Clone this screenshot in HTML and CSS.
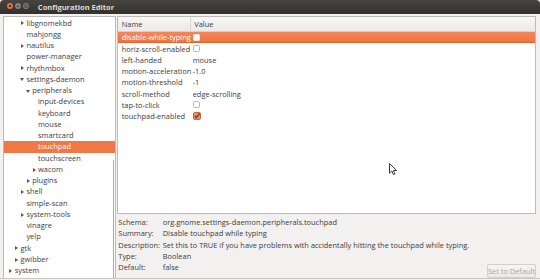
FILE: index.html
```html
<!DOCTYPE html>
<html>
<head>
<meta charset="utf-8">
<link rel="stylesheet" href="styles.css">
</head>
<body>
<div class="window">
  <div class="titlebar">
    <div class="wbtns">
      <svg class="wbtn" width="6" height="6" viewBox="0 0 6 6"><circle cx="3" cy="3" r="2.9" fill="#ef7445"/><path d="M1.9 1.9L4.1 4.1M4.1 1.9L1.9 4.1" stroke="#3a1e10" stroke-width="0.9"/></svg>
      <svg class="wbtn" width="6" height="6" viewBox="0 0 6 6"><circle cx="3" cy="3" r="2.9" fill="#85847f"/><path d="M1.7 3.4H4.3" stroke="#3b3a36" stroke-width="0.9"/></svg>
      <svg class="wbtn" width="6" height="6" viewBox="0 0 6 6"><circle cx="3" cy="3" r="2.9" fill="#85847f"/><rect x="1.8" y="1.8" width="2.4" height="2.4" fill="none" stroke="#3b3a36" stroke-width="0.8"/></svg>
    </div>
    <div class="wtitle">Configuration Editor</div>
  </div>
  <div class="content">
    <div class="tree">
      <div class="trow l2"><span class="exp rt"></span>libgnomekbd</div>
      <div class="trow l2"><span class="exp"></span>mahjongg</div>
      <div class="trow l2"><span class="exp rt"></span>nautilus</div>
      <div class="trow l2"><span class="exp"></span>power-manager</div>
      <div class="trow l2"><span class="exp rt"></span>rhythmbox</div>
      <div class="trow l2"><span class="exp dn"></span>settings-daemon</div>
      <div class="trow l3"><span class="exp dn"></span>peripherals</div>
      <div class="trow l4"><span class="exp"></span>input-devices</div>
      <div class="trow l4"><span class="exp"></span>keyboard</div>
      <div class="trow l4"><span class="exp"></span>mouse</div>
      <div class="trow l4"><span class="exp"></span>smartcard</div>
      <div class="trow l4 sel"><span class="exp"></span>touchpad</div>
      <div class="trow l4"><span class="exp"></span>touchscreen</div>
      <div class="trow l4"><span class="exp rt"></span>wacom</div>
      <div class="trow l3"><span class="exp rt"></span>plugins</div>
      <div class="trow l2"><span class="exp rt"></span>shell</div>
      <div class="trow l2"><span class="exp"></span>simple-scan</div>
      <div class="trow l2"><span class="exp rt"></span>system-tools</div>
      <div class="trow l2"><span class="exp"></span>vinagre</div>
      <div class="trow l2"><span class="exp"></span>yelp</div>
      <div class="trow l1"><span class="exp rt"></span>gtk</div>
      <div class="trow l1"><span class="exp rt"></span>gwibber</div>
      <div class="trow l0"><span class="exp rt"></span>system</div>
      <div class="thumb"></div>
    </div>
    <div class="right">
      <div class="list">
        <div class="lhead">
          <div class="cname">Name</div>
          <div class="cval hsep">Value</div>
        </div>
        <div class="lrow sel"><div class="cname">disable-while-typing</div><div class="cval"><svg width="7" height="7" viewBox="0 0 7 7"><rect x="0.5" y="0.5" width="6" height="6" rx="1" fill="#fff" stroke="#fbe4da"/></svg></div></div>
        <div class="lrow"><div class="cname">horiz-scroll-enabled</div><div class="cval"><svg width="7" height="7" viewBox="0 0 7 7"><rect x="0.5" y="0.5" width="6" height="6" rx="1" fill="#fff" stroke="#b9b7b3"/></svg></div></div>
        <div class="lrow"><div class="cname">left-handed</div><div class="cval">mouse</div></div>
        <div class="lrow"><div class="cname">motion-acceleration</div><div class="cval">-1.0</div></div>
        <div class="lrow"><div class="cname">motion-threshold</div><div class="cval">-1</div></div>
        <div class="lrow"><div class="cname">scroll-method</div><div class="cval">edge-scrolling</div></div>
        <div class="lrow"><div class="cname">tap-to-click</div><div class="cval"><svg width="7" height="7" viewBox="0 0 7 7"><rect x="0.5" y="0.5" width="6" height="6" rx="1" fill="#fff" stroke="#b9b7b3"/></svg></div></div>
        <div class="lrow"><div class="cname">touchpad-enabled</div><div class="cval"><svg width="8" height="8" viewBox="0 0 8 8"><rect x="0.5" y="0.5" width="7" height="7" rx="1.2" fill="#e9906a" stroke="#c2683f"/><path d="M1.8 3.8L3.4 5.6L6.6 1.4" fill="none" stroke="#7a2e12" stroke-width="1.2"/></svg></div></div>
      </div>
      <div class="bottom">
        <div class="info">
          <div class="ilabel">Schema:</div><div class="ival">org.gnome.settings-daemon.peripherals.touchpad</div>
          <div class="ilabel">Summary:</div><div class="ival">Disable touchpad while typing</div>
          <div class="ilabel">Description:</div><div class="ival">Set this to TRUE if you have problems with accidentally hitting the touchpad while typing.</div>
          <div class="ilabel">Type:</div><div class="ival">Boolean</div>
          <div class="ilabel">Default:</div><div class="ival">false</div>
        </div>
        <div class="btn">Set to Default</div>
      </div>
    </div>
  </div>
  <svg class="cursor" width="9" height="13" viewBox="0 0 9 13"><path d="M0.5 0.5L0.5 10.2L2.8 8L4.4 11.6L5.9 10.9L4.4 7.5L7.6 7.5Z" fill="#fff" stroke="#222" stroke-width="0.9" stroke-linejoin="round"/></svg>
</div>
</body>
</html>
```
FILE: styles.css
```css
html, body {
  margin: 0;
  padding: 0;
  background: #f2f1f0;
}
body {
  font-family: "Open Sans", "Liberation Sans", sans-serif;
  font-size: 7.45px;
  color: #3c3c3c;
}
.window {
  position: relative;
  width: 540px;
  height: 280px;
  display: flex;
  flex-direction: column;
  overflow: hidden;
  background: #f2f1f0;
}
.titlebar {
  height: 14px;
  flex: none;
  display: flex;
  align-items: center;
  background: linear-gradient(#45443f, #393834 60%, #32312d);
  border-top-right-radius: 4px;
  border-top-left-radius: 4px;
}
.wbtns {
  display: flex;
  gap: 2.4px;
  padding-left: 6.7px;
  margin-top: -2px;
}
.wbtn { display: block; }
.wtitle {
  margin-left: 8.4px;
  margin-top: -1px;
  font-weight: bold;
  font-size: 7.6px;
  color: #dfdbd2;
  letter-spacing: -0.05px;
}
.content {
  flex: 1;
  display: flex;
  gap: 1px;
  padding: 2px 4px 0 3px;
  border-bottom: 1px solid #c9c7c3;
  margin-bottom: 1px;
  min-height: 0;
}
.tree {
  position: relative;
  width: 111px;
  flex: none;
  background: #fff;
  border: 1px solid #bdbbb7;
  border-bottom: none;
  padding-top: 0.7px;
  overflow: hidden;
}
.trow {
  height: 11.25px;
  line-height: 11.25px;
  display: flex;
  align-items: center;
  white-space: nowrap;
}
.trow.sel {
  background: #f07746;
  color: #fff;
}
.l0 { padding-left: 4.3px; }
.l1 { padding-left: 10.1px; }
.l2 { padding-left: 16px; }
.l3 { padding-left: 21.8px; }
.l4 { padding-left: 27.6px; }
.exp {
  width: 6.4px;
  height: 11.25px;
  flex: none;
  position: relative;
}
.exp.rt::before {
  content: "";
  position: absolute;
  left: 1px;
  top: 3.6px;
  width: 0;
  height: 0;
  border-style: solid;
  border-width: 2.5px 0 2.5px 3px;
  border-color: transparent transparent transparent #555;
}
.exp.dn::before {
  content: "";
  position: absolute;
  left: 0.4px;
  top: 4.4px;
  width: 0;
  height: 0;
  border-style: solid;
  border-width: 3px 2.5px 0 2.5px;
  border-color: #555 transparent transparent transparent;
}
.thumb {
  position: absolute;
  right: 1px;
  top: 143px;
  bottom: 0;
  width: 1.4px;
  background: #e8966c;
}
.right {
  flex: 1;
  display: flex;
  flex-direction: column;
  min-width: 0;
}
.list {
  height: 196px;
  flex: none;
  background: #fff;
  border: 1px solid #bdbbb7;
  overflow: hidden;
}
.lhead {
  height: 13.7px;
  display: flex;
  align-items: center;
  background: linear-gradient(#f8f7f6, #ebeae8);
  border-bottom: 1px solid #d3d1cd;
}
.lrow {
  height: 11.25px;
  display: flex;
  align-items: center;
  white-space: nowrap;
}
.lrow.sel {
  background: linear-gradient(#f4875a, #ee733f);
  color: #fff;
  box-shadow: inset 0 -1px 0 #d9652f;
}
.cname {
  width: 72px;
  flex: none;
  padding-left: 3.7px;
  box-sizing: border-box;
}
.cval {
  padding-left: 2.7px;
  display: flex;
  align-items: center;
  height: 100%;
}
.lhead .cval { padding-left: 3.3px; }
.hsep {
  border-left: 1px solid #d9d7d3;
  height: 100%;
  box-sizing: border-box;
}
.lrow .cval svg { display: block; margin-left: 0.3px; }
.bottom {
  flex: 1;
  display: flex;
  justify-content: space-between;
  padding-top: 2.6px;
}
.info {
  display: grid;
  grid-template-columns: 44.4px auto;
  grid-auto-rows: 11.2px;
  align-items: center;
  padding-left: 1.3px;
  align-self: flex-start;
  white-space: nowrap;
}
.btn {
  align-self: flex-end;
  margin-bottom: 0.5px;
  width: 49px;
  height: 13.4px;
  box-sizing: border-box;
  border: 1px solid #d2d0cc;
  border-radius: 2px;
  background: linear-gradient(#f6f5f4, #ebeae8);
  color: #a9a7a3;
  display: flex;
  align-items: center;
  justify-content: center;
  white-space: nowrap;
}
.cursor {
  position: absolute;
  left: 389px;
  top: 163px;
}
```
